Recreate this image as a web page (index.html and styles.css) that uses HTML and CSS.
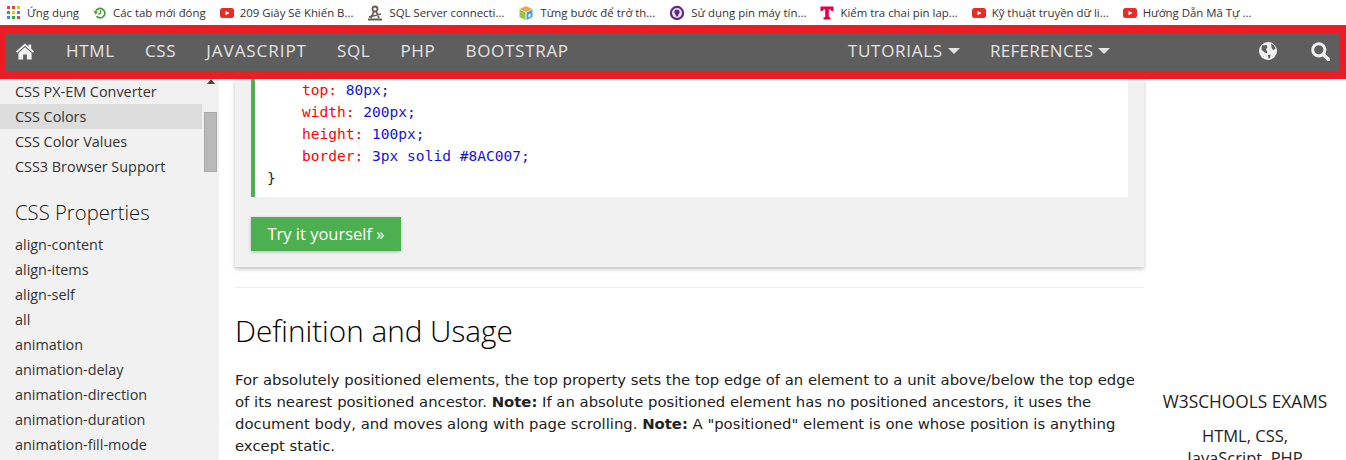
FILE: index.html
```html
<!DOCTYPE html>
<html lang="vi">
<head>
<meta charset="utf-8">
<title>CSS top property</title>
<link rel="stylesheet" href="styles.css">
</head>
<body>
<div class="bookmarks">
  <a class="bm bm-apps"><svg class="ic" viewBox="0 0 14 14"><g><rect x="0" y="0" width="3" height="3" fill="#ea4335"/><rect x="5" y="0" width="3" height="3" fill="#ea4335"/><rect x="10" y="0" width="3" height="3" fill="#fbbc05"/><rect x="0" y="5" width="3" height="3" fill="#34a853"/><rect x="5" y="5" width="3" height="3" fill="#fbbc05"/><rect x="10" y="5" width="3" height="3" fill="#4285f4"/><rect x="0" y="10" width="3" height="3" fill="#4285f4"/><rect x="5" y="10" width="3" height="3" fill="#34a853"/><rect x="10" y="10" width="3" height="3" fill="#ea4335"/></g></svg><span>Ứng dụng</span></a>
  <a class="bm"><svg class="ic" viewBox="0 0 16 16"><path d="M3.2 6A5.4 5.4 0 1 1 4 11.6" fill="none" stroke="#4c9a3c" stroke-width="2"/><path d="M0.5 5.5L5.5 6.5L3 10Z" fill="#4c9a3c"/><path d="M8.5 4.5V8.5L6 9.5" fill="none" stroke="#4c9a3c" stroke-width="1.4"/></svg><span>Các tab mới đóng</span></a>
  <a class="bm"><svg class="ic" viewBox="0 0 14 14"><rect x="0" y="2" width="14" height="10" rx="2.5" fill="#e52d27"/><path d="M5.5 4.8L9.5 7L5.5 9.2Z" fill="#fff"/></svg><span>209 Giây Sẽ Khiến B...</span></a>
  <a class="bm"><svg class="ic ic-wide" viewBox="0 0 16 16"><path d="M8 1.5a2.5 2.5 0 1 1 0 5a2.5 2.5 0 1 1 0-5M7 6L4 13M9 6L12 13M2 12L14 9M1 14.5H15" fill="none" stroke="#6b5b53" stroke-width="1.8"/></svg><span>SQL Server connecti...</span></a>
  <a class="bm"><svg class="ic ic-wide" viewBox="0 0 16 16"><path d="M8 1L14.5 4L8 7L1.5 4Z" fill="#f0a84a"/><path d="M1.5 4.5L7.5 7.5V15L1.5 12Z" fill="#9cc04c"/><path d="M8.5 7.5L14.5 4.5V12L8.5 15Z" fill="#4a9fd8"/><path d="M10.5 9.5V12.5L12.5 11.5V8.5Z" fill="#fff"/></svg><span>Từng bước để trở th...</span></a>
  <a class="bm"><svg class="ic ic-wide" viewBox="0 0 16 16"><circle cx="8" cy="8" r="7.2" fill="#5b2c83"/><circle cx="8" cy="8" r="5" fill="#e9e3ee"/><circle cx="8" cy="7" r="2.6" fill="#5b2c83"/><rect x="6.8" y="8" width="2.4" height="3.4" fill="#5b2c83"/></svg><span>Sử dụng pin máy tín...</span></a>
  <a class="bm"><svg class="ic" viewBox="0 0 14 14"><path d="M0.5 0.5H13.5V5H11.5L10.5 3.5H8.8V11L10.5 11.5V13.5H3.5V11.5L5.2 11V3.5H3.5L2.5 5H0.5Z" fill="#e5004f"/></svg><span>Kiểm tra chai pin lap...</span></a>
  <a class="bm"><svg class="ic" viewBox="0 0 14 14"><rect x="0" y="2" width="14" height="10" rx="2.5" fill="#e52d27"/><path d="M5.5 4.8L9.5 7L5.5 9.2Z" fill="#fff"/></svg><span>Kỹ thuật truyền dữ li...</span></a>
  <a class="bm"><svg class="ic" viewBox="0 0 14 14"><rect x="0" y="2" width="14" height="10" rx="2.5" fill="#e52d27"/><path d="M5.5 4.8L9.5 7L5.5 9.2Z" fill="#fff"/></svg><span>Hướng Dẫn Mã Tự ...</span></a>
</div>

<nav class="topnav">
  <a class="nav-home"><svg class="home-icon" viewBox="0 0 20 18"><path d="M10 0.5L0.3 9L1.6 10.4L10 3.2L18.4 10.4L19.7 9L16.5 6.2V1.5H13.8V3.9Z" fill="#f1f1f1"/><path d="M10 4.6L3 10.6V17.6H8V12.2H12V17.6H17V10.6Z" fill="#f1f1f1"/></svg></a>
  <a class="nav-link">HTML</a>
  <a class="nav-link">CSS</a>
  <a class="nav-link nav-loose">JAVASCRIPT</a>
  <a class="nav-link">SQL</a>
  <a class="nav-link">PHP</a>
  <a class="nav-link">BOOTSTRAP</a>
  <a class="nav-link nav-push">TUTORIALS <i class="caret"></i></a>
  <a class="nav-link nav-tight">REFERENCES <i class="caret"></i></a>
  <a class="nav-icon nav-globe"><svg class="tool-icon" viewBox="0 0 18 18"><circle cx="9" cy="9" r="9" fill="#f1f1f1"/><path d="M3 3.5L7.5 3L8.5 5L7 7.5L8.5 10L7.5 11.5L5 10L2.5 7.5ZM9 13L11.5 12.5L11 16L9.5 16.5ZM12 1.5L15 3.5L16.5 7L14 8L12.5 5.5Z" fill="#5e5e5e"/></svg></a>
  <a class="nav-icon nav-search"><svg class="tool-icon" viewBox="0 0 19 19"><circle cx="7.8" cy="7.8" r="6.1" fill="none" stroke="#f1f1f1" stroke-width="3"/><path d="M12.4 12.4L17.4 17.4" stroke="#f1f1f1" stroke-width="3.6" stroke-linecap="round"/></svg></a>
</nav>

<div class="page">
  <aside class="sidebar">
    <div class="side-list">
      <a class="side-item">CSS PX-EM Converter</a>
      <a class="side-item is-active">CSS Colors</a>
      <a class="side-item">CSS Color Values</a>
      <a class="side-item">CSS3 Browser Support</a>
      <h2 class="side-title">CSS Properties</h2>
      <a class="side-item">align-content</a>
      <a class="side-item">align-items</a>
      <a class="side-item">align-self</a>
      <a class="side-item">all</a>
      <a class="side-item">animation</a>
      <a class="side-item">animation-delay</a>
      <a class="side-item">animation-direction</a>
      <a class="side-item">animation-duration</a>
      <a class="side-item">animation-fill-mode</a>
    </div>
    <div class="scroll">
      <i class="scroll-arrow"></i>
      <div class="scroll-thumb"></div>
    </div>
  </aside>

  <main class="content">
    <section class="example">
      <div class="code">
        <div class="code-line indent"><span class="prop">top:</span> <span class="val">80px;</span></div>
        <div class="code-line indent"><span class="prop">width:</span> <span class="val">200px;</span></div>
        <div class="code-line indent"><span class="prop">height:</span> <span class="val">100px;</span></div>
        <div class="code-line indent"><span class="prop">border:</span> <span class="val">3px solid #8AC007;</span></div>
        <div class="code-line">}</div>
      </div>
      <a class="try-btn">Try it yourself »</a>
    </section>
    <hr class="rule">
    <h1 class="heading">Definition and Usage</h1>
    <p class="para">For absolutely positioned elements, the top property sets the top edge of an element to a unit above/below the top edge of its nearest positioned ancestor. <b>Note:</b> If an absolute positioned element has no positioned ancestors, it uses the document body, and moves along with page scrolling. <b>Note:</b> A "positioned" element is one whose position is anything except static.</p>
  </main>

  <aside class="right">
    <h3 class="right-title">W3SCHOOLS EXAMS</h3>
    <p class="right-text">HTML, CSS,<br>JavaScript, PHP</p>
  </aside>
</div>
</body>
</html>
```

FILE: styles.css
```css
* { box-sizing: border-box; }
html, body { margin: 0; padding: 0; }
body {
  width: 1346px;
  height: 460px;
  overflow: hidden;
  background: #fff;
  color: #000;
  font-family: "DejaVu Sans", sans-serif;
}

/* bookmarks bar */
.bookmarks {
  display: flex;
  align-items: center;
  height: 25px;
  padding: 0 0 0 7px;
  gap: 14px;
  background: #fff;
  font-family: "Open Sans", sans-serif;
  font-size: 11.4px;
  color: #333;
  white-space: nowrap;
}
.bm { display: flex; align-items: center; gap: 6px; }
.ic { width: 14px; height: 14px; flex: none; }
.ic-wide { width: 16px; height: 16px; }

/* top nav */
.topnav {
  display: flex;
  align-items: center;
  height: 54px;
  padding-bottom: 2px;
  background: #5e5e5e;
  border: solid #ed1c24;
  border-width: 8px 7px 8px 5px;
  font-family: "Open Sans", sans-serif;
  font-size: 17px;
  letter-spacing: .7px;
  color: #e4e4e4;
}
.nav-home { display: flex; padding: 0 16px 0 10px; }
.home-icon { width: 20px; height: 17px; display: block; }
.nav-link { padding: 0 15px 2px; white-space: nowrap; }
.nav-push { margin-left: auto; }
.nav-tight { letter-spacing: .3px; }
.nav-loose { letter-spacing: .95px; }
.caret {
  display: inline-block;
  width: 0;
  height: 0;
  vertical-align: 3px;
  border-style: solid;
  border-width: 6px 6px 0;
  border-color: #e4e4e4 transparent transparent;
}
.nav-icon { display: flex; }
.nav-globe { margin-left: 134px; }
.nav-search { margin-left: 34px; margin-right: 9px; }
.tool-icon { width: 18px; height: 18px; display: block; }
.nav-search .tool-icon { width: 19px; height: 19px; }

/* layout */
.page { display: flex; align-items: flex-start; height: 381px; overflow: hidden; }

/* sidebar */
.sidebar { display: flex; flex: none; width: 219px; height: 381px; background: #f1f1f1; overflow: hidden; }
.side-list { width: 202px; flex: none; font-family: "Open Sans", sans-serif; font-size: 14.4px; color: #333; }
.side-item { display: block; height: 25px; line-height: 25px; padding-left: 15px; white-space: nowrap; }
.side-item.is-active { background: #dcdcdc; }
.side-title { height: 53px; margin: 0; padding: 20px 0 0 15px; font-size: 20.3px; line-height: 27px; font-weight: 300; color: #111; }
.scroll { display: flex; flex-direction: column; width: 14px; margin-left: 2px; }
.scroll-arrow {
  width: 0;
  height: 0;
  margin: 0 0 28px 3px;
  border-style: solid;
  border-width: 0 4px 5px;
  border-color: transparent transparent #444;
}
.scroll-thumb { width: 13px; height: 60px; background: #b9b9b9; border: 1px solid #a9a9a9; }

/* main */
.content { flex: none; width: 909px; margin-left: 16px; }
.example { height: 188px; padding: 0 16px; background: #f1f1f1; box-shadow: 0 2px 4px rgba(0,0,0,.25); }
.code {
  height: 118px;
  padding-bottom: 1px;
  background: #fff;
  border-left: 4px solid #4caf50;
  font-family: "DejaVu Sans Mono", monospace;
  font-size: 14.55px;
  color: #222;
  overflow: hidden;
}
.code-line { height: 22px; line-height: 21px; padding-left: 12px; white-space: pre; }
.indent { padding-left: 47px; }
.prop { color: #f00; }
.val { color: #1414d8; }
.try-btn {
  display: block;
  width: 150px;
  height: 34px;
  margin-top: 20px;
  background: #4caf50;
  color: #fff;
  font-family: "Open Sans", sans-serif;
  font-size: 16.5px;
  line-height: 34px;
  text-align: center;
  box-shadow: 0 1px 3px rgba(0,0,0,.25);
}
.rule { height: 1px; margin: 20px 0 0; border: 0; background: #eee; }
.heading { margin: 22px 0 0; font-family: "Open Sans", sans-serif; font-size: 29.7px; line-height: 42px; font-weight: 300; color: #000; }
.para { margin: 17px 0 0; font-size: 14.83px; line-height: 22px; color: #222; }
.right { flex: none; width: 202px; text-align: center; padding-top: 312px; font-family: "Open Sans", sans-serif; }
.right-title { margin: 0; font-size: 17.3px; line-height: 22px; font-weight: 400; color: #222; }
.right-text { margin: 12px 0 0; font-size: 16.5px; line-height: 22px; color: #222; }
```
